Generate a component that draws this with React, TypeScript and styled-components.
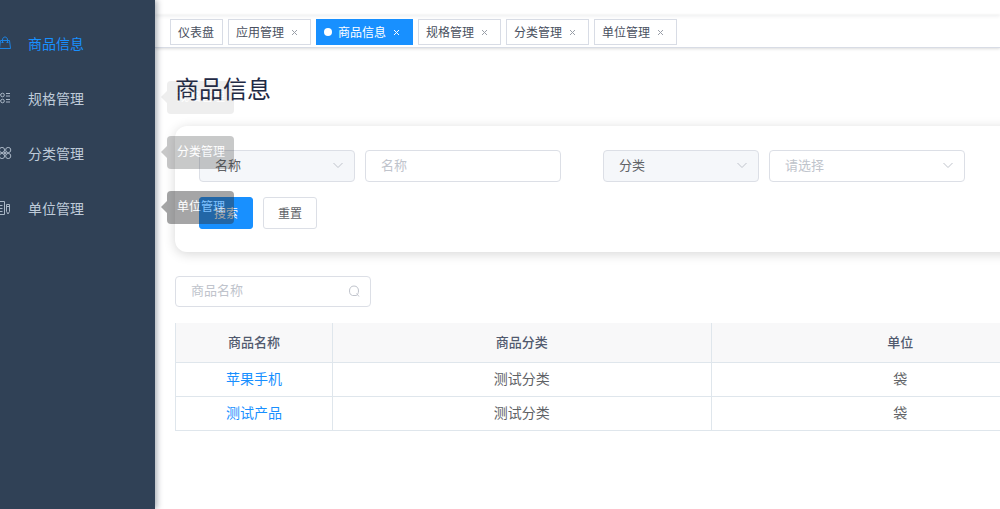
import React from "react";
import styled, { createGlobalStyle, css } from "styled-components";

const GlobalStyle = createGlobalStyle`
  *, *::before, *::after { box-sizing: border-box; }
  body {
    margin: 0;
    background: #fff;
    color: #606266;
    font-family: "Noto Sans CJK SC", "Liberation Sans", sans-serif;
    font-size: 14px;
  }
  button, input, select { font-family: inherit; margin: 0; }
  a { text-decoration: none; }
`;

const Shell = styled.div`
  display: flex;
  min-height: 100vh;
  overflow: hidden;
`;

const Sidebar = styled.aside`
  position: relative;
  z-index: 2;
  flex: 0 0 155px;
  padding-top: 16px;
  background: #304156;
  box-shadow: 2px 0 6px rgba(0, 21, 41, 0.35);
`;

const MenuItem = styled.a<{ $active?: boolean }>`
  position: relative;
  display: flex;
  align-items: center;
  gap: 16px;
  height: 55px;
  padding-bottom: 2px;
  line-height: 20px;
  color: ${(p) => (p.$active ? "#1890ff" : "#bfcbd9")};
`;

const MenuIcon = styled.svg`
  flex: none;
  width: 12px;
  height: 14px;
  fill: none;
  stroke: currentColor;
  stroke-width: 1;
  opacity: 0.85;
`;

const Tooltip = styled.span<{ $opacity: number }>`
  position: absolute;
  top: 10px;
  left: 167px;
  padding: 6px 9px 9px 10px;
  border-radius: 4px;
  background: #303133;
  color: #fff;
  font-size: 12px;
  line-height: 18px;
  white-space: nowrap;
  pointer-events: none;
  opacity: ${(p) => p.$opacity};

  &::before {
    content: "";
    position: absolute;
    top: 10px;
    right: 100%;
    border: 6px solid transparent;
    border-left: 0;
    border-right-color: #303133;
  }
`;

const Main = styled.main`
  flex: 1;
  min-width: 0;
`;

const TopBar = styled.header`
  height: 15px;
  background: #fff;
  box-shadow: 0 1px 4px rgba(0, 21, 41, 0.08);
`;

const TagBar = styled.nav`
  display: flex;
  align-items: flex-start;
  gap: 5px;
  height: 33px;
  padding: 4px 15px 0;
  border-bottom: 1px solid #d8dce5;
  box-shadow: 0 1px 3px rgba(0, 0, 0, 0.12), 0 0 3px rgba(0, 0, 0, 0.04);
`;

const Tag = styled.span<{ $active?: boolean }>`
  display: flex;
  align-items: center;
  height: 26px;
  padding: 0 8px 0 7px;
  border: 1px solid #d8dce5;
  color: #495060;
  font-size: 12px;
  line-height: 24px;
  white-space: nowrap;

  ${(p) =>
    p.$active &&
    css`
      border-color: #1890ff;
      background: #1890ff;
      color: #fff;

      &::before {
        content: "";
        width: 8px;
        height: 8px;
        margin-right: 6px;
        border-radius: 50%;
        background: #fff;
      }
    `}
`;

const TagLink = styled.a`
  color: inherit;
`;

const CloseButton = styled.button<{ $light?: boolean }>`
  display: grid;
  place-items: center;
  width: 16px;
  height: 16px;
  margin-left: 2px;
  padding: 0;
  border: 0;
  background: none;
  color: ${(p) => (p.$light ? "#fff" : "#9a9fa8")};

  svg {
    width: 5px;
    height: 5px;
    margin-top: 1px;
    stroke: currentColor;
  }
`;

const Content = styled.div`
  min-width: 955px;
  padding: 22px 20px;
`;

const Title = styled.h1`
  margin: 0 0 20px;
  color: #1f2a45;
  font-size: 24px;
  font-weight: 400;
  line-height: 36px;
`;

const FilterCard = styled.form`
  padding: 24px 24px 23px;
  border-radius: 12px;
  background: #fff;
  box-shadow: 0 2px 12px rgba(0, 0, 0, 0.16);
`;

const FilterRow = styled.div`
  display: flex;
  gap: 42px;
  margin-bottom: 15px;
`;

const FieldPair = styled.div`
  display: flex;
  gap: 10px;
`;

const ButtonRow = styled.div`
  display: flex;
  gap: 10px;
`;

const Field = styled.div<{ $narrow?: boolean; $short?: boolean }>`
  position: relative;
  width: ${(p) => (p.$narrow ? 156 : 196)}px;
  height: ${(p) => (p.$short ? 31 : 32)}px;
`;

const control = css`
  width: 100%;
  height: 100%;
  padding: 0 30px 4px 15px;
  border: 1px solid #dcdfe6;
  border-radius: 4px;
  outline: 0;
  font-size: 13px;
`;

const TextInput = styled.input`
  ${control}
  background: #fff;
  color: #606266;
  &::placeholder { color: #c0c4cc; opacity: 1; }
`;

const Select = styled.select<{ $filled?: boolean }>`
  ${control}
  appearance: none;
  background: ${(p) => (p.$filled ? "#f5f7fa" : "#fff")};
  color: ${(p) => (p.$filled ? "#606266" : "#c0c4cc")};
`;

const FieldIcon = styled.svg`
  position: absolute;
  top: 50%;
  right: 11px;
  width: 12px;
  height: 12px;
  margin-top: -7px;
  fill: none;
  stroke: #c0c4cc;
  pointer-events: none;
`;

const Button = styled.button<{ $primary?: boolean }>`
  height: 32px;
  padding: 0 14px 2px;
  border: 1px solid ${(p) => (p.$primary ? "#1890ff" : "#dcdfe6")};
  border-radius: 3px;
  background: ${(p) => (p.$primary ? "#1890ff" : "#fff")};
  color: ${(p) => (p.$primary ? "#fff" : "#606266")};
  font-size: 12px;
`;

const SearchBar = styled.div`
  margin: 24px 0 16px;
`;

const Table = styled.table`
  width: 100%;
  table-layout: fixed;
  border-collapse: separate;
  border-spacing: 0;
  border-left: 1px solid #dfe6ec;
`;

const HeadCell = styled.th<{ $fixed?: boolean }>`
  width: ${(p) => (p.$fixed ? "157px" : "auto")};
  height: 40px;
  padding: 0 10px 2px;
  border-right: 1px solid #dfe6ec;
  border-bottom: 1px solid #dfe6ec;
  background: #f8f8f9;
  color: #515a6e;
  font-size: 13px;
  font-weight: 500;
  line-height: 20px;
`;

const Cell = styled.td`
  height: 34px;
  padding: 0 10px 4px;
  border-right: 1px solid #dfe6ec;
  border-bottom: 1px solid #dfe6ec;
  text-align: center;
  line-height: 20px;
`;

const ProductLink = styled.a`
  color: #1890ff;
`;

const BagIcon = () => (
  <MenuIcon viewBox="0 0 12 14" aria-hidden="true">
    <path d="M.5 4.500H9.500L10.500 12.500H-.5zM2.500 7V4C2.500 0 7.500 0 7.500 4V7" />
    <path d="M1.500 6.500H3.500M6.500 6.500H8.500" />
  </MenuIcon>
);

const SpecIcon = () => (
  <MenuIcon viewBox="0 0 12 14" aria-hidden="true">
    <circle cx="2.5" cy="4" r="1.8" />
    <circle cx="2.5" cy="10" r="1.8" />
    <path d="M-2 3.500H.5M-2 9.500H.5M6 2.500H10M6 5H10M6 8.500H10M6 11H10" />
  </MenuIcon>
);

const CloverIcon = () => (
  <MenuIcon viewBox="0 0 12 14" aria-hidden="true">
    <circle cx="2" cy="4" r="2.6" />
    <circle cx="8.2" cy="4" r="2.6" />
    <circle cx="2" cy="10" r="2.6" />
    <circle cx="8.2" cy="10" r="2.6" />
    <path d="M3.500 5.500L6.700 8.500M6.700 5.500L3.500 8.500" />
  </MenuIcon>
);

const UnitIcon = () => (
  <MenuIcon viewBox="0 0 12 14" aria-hidden="true">
    <path d="M-2 .5H4.500V13.500H-2M0 4.500H2.500M0 7.500H2.500M0 10.500H2.500M6.500 3.500H9.500V10.500L8 13L6.500 10.500zM6.500 5.500H9.500" />
  </MenuIcon>
);

const Chevron = () => (
  <FieldIcon viewBox="0 0 12 12" aria-hidden="true">
    <path d="M1.500 4L6 8.500L10.500 4" />
  </FieldIcon>
);

const menu = [
  { label: "商品信息", icon: <BagIcon />, tip: 0 },
  { label: "规格管理", icon: <SpecIcon />, tip: 0.08 },
  { label: "分类管理", icon: <CloverIcon />, tip: 0.26 },
  { label: "单位管理", icon: <UnitIcon />, tip: 0.43 },
];

const tags = ["仪表盘", "应用管理", "商品信息", "规格管理", "分类管理", "单位管理"];

const products = [
  { name: "苹果手机", category: "测试分类", unit: "袋" },
  { name: "测试产品", category: "测试分类", unit: "袋" },
];

export default function App() {
  return (
    <>
      <GlobalStyle />
      <Shell>
        <Sidebar>
          {menu.map((item, i) => (
            <MenuItem key={item.label} href="#" $active={i === 0}>
              {item.icon}
              {item.label}
              {item.tip > 0 && <Tooltip $opacity={item.tip}>{item.label}</Tooltip>}
            </MenuItem>
          ))}
        </Sidebar>
        <Main>
          <TopBar />
          <TagBar>
            {tags.map((label, i) => (
              <Tag key={label} $active={i === 2}>
                <TagLink href="#">{label}</TagLink>
                {i > 0 && (
                  <CloseButton type="button" aria-label={`关闭${label}`} $light={i === 2}>
                    <svg viewBox="0 0 5 5" aria-hidden="true">
                      <path d="M0 0L5 5M5 0L0 5" />
                    </svg>
                  </CloseButton>
                )}
              </Tag>
            ))}
          </TagBar>
          <Content>
            <Title>商品信息</Title>
            <FilterCard onSubmit={(e) => e.preventDefault()}>
              <FilterRow>
                <FieldPair>
                  <Field $narrow>
                    <Select $filled aria-label="文本条件">
                      <option>名称</option>
                    </Select>
                    <Chevron />
                  </Field>
                  <Field>
                    <TextInput type="text" placeholder="名称" aria-label="名称" />
                  </Field>
                </FieldPair>
                <FieldPair>
                  <Field $narrow>
                    <Select $filled aria-label="选项条件">
                      <option>分类</option>
                    </Select>
                    <Chevron />
                  </Field>
                  <Field>
                    <Select aria-label="分类">
                      <option>请选择</option>
                    </Select>
                    <Chevron />
                  </Field>
                </FieldPair>
              </FilterRow>
              <ButtonRow>
                <Button type="submit" $primary>搜索</Button>
                <Button type="reset">重置</Button>
              </ButtonRow>
            </FilterCard>
            <SearchBar>
              <Field $short>
                <TextInput type="text" placeholder="商品名称" aria-label="商品名称" />
                <FieldIcon viewBox="0 0 12 12" aria-hidden="true">
                  <path d="M8.500 10.500H4.500C2.500 10 1.500 8.500 1.500 6C1.500 3 3 1 6 1S10.500 3 10.500 6C10.500 8 9.500 9.500 8.500 10.500M8.500 8.500L11 11.500" />
                </FieldIcon>
              </Field>
            </SearchBar>
            <Table>
              <thead>
                <tr>
                  <HeadCell $fixed>商品名称</HeadCell>
                  <HeadCell>商品分类</HeadCell>
                  <HeadCell>单位</HeadCell>
                </tr>
              </thead>
              <tbody>
                {products.map((p) => (
                  <tr key={p.name}>
                    <Cell><ProductLink href="#">{p.name}</ProductLink></Cell>
                    <Cell>{p.category}</Cell>
                    <Cell>{p.unit}</Cell>
                  </tr>
                ))}
              </tbody>
            </Table>
          </Content>
        </Main>
      </Shell>
    </>
  );
}
